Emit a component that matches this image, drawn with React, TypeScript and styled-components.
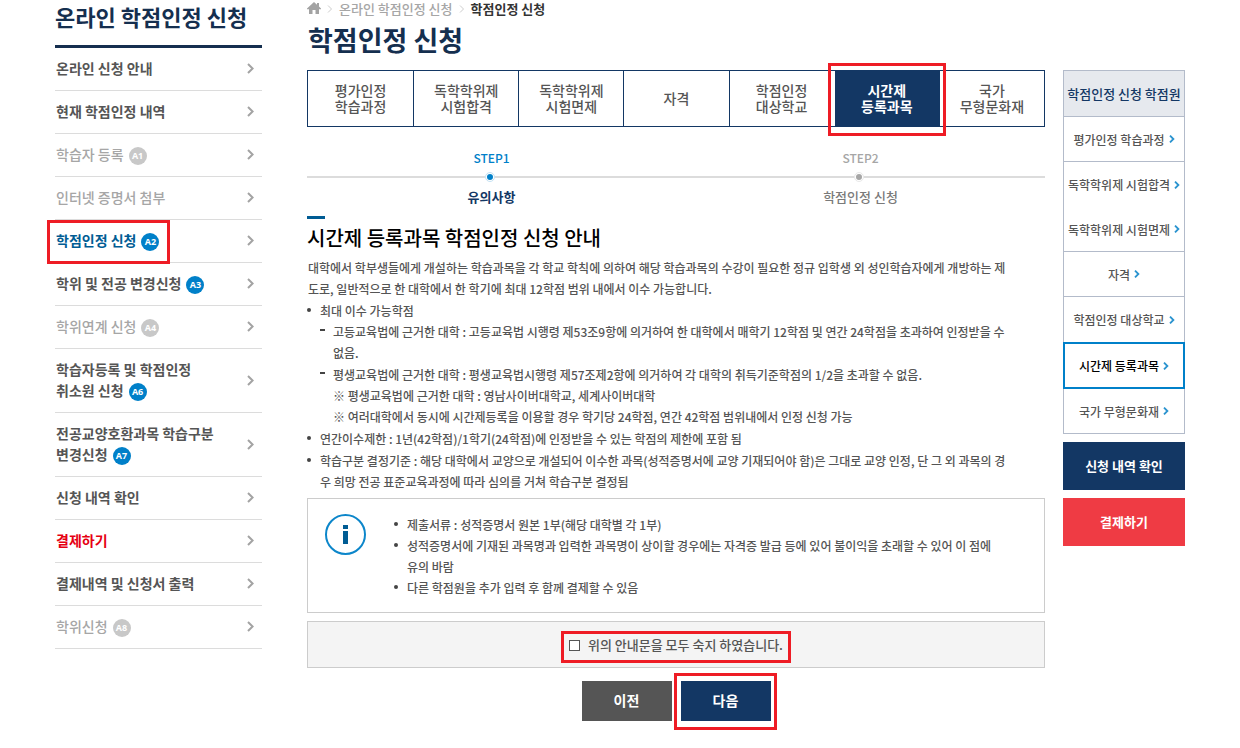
import React, { useState } from "react";
import styled, { createGlobalStyle, css } from "styled-components";

const color = {
  navy: "#133764",
  ink: "#152f4f",
  blue: "#0080c9",
  deepBlue: "#005c94",
  text: "#555",
  muted: "#a6a6a6",
  line: "#dcdcdc",
  rail: "#b3bbca",
  mark: "#ee1c25",
};

const GlobalStyle = createGlobalStyle`
  *, *::before, *::after { box-sizing: border-box; }
  body {
    margin: 0;
    background: #fff;
    color: ${color.text};
    font-family: "Noto Sans CJK KR", "Noto Sans", sans-serif;
    font-size: 12px;
    font-weight: 500;
  }
  h1, h2, h3, p, ul, ol { margin: 0; padding: 0; }
  ul, ol { list-style: none; }
  a { color: inherit; text-decoration: none; }
  button { font-family: inherit; border: 0; cursor: pointer; }
`;

const Page = styled.div`
  display: grid;
  grid-template-columns: 207px minmax(0, 1fr) 122px;
  align-items: start;
  padding: 0 55px;
`;

/* Red frame laid over the control that the guide points at */
const Mark = styled.span<{ $inset: string }>`
  position: absolute;
  inset: ${(p) => p.$inset};
  border: 3px solid ${color.mark};
  pointer-events: none;
  z-index: 2;
`;

/* ---------- left menu ---------- */

const SideTitle = styled.h2`
  height: 48px;
  padding-bottom: 12px;
  border-bottom: 3px solid ${color.ink};
  color: ${color.ink};
  font-size: 22px;
  font-weight: 700;
  line-height: 32px;
  white-space: nowrap;
`;

type Tone = "normal" | "off" | "current" | "pay";
const toneColor: Record<Tone, string> = {
  normal: color.text,
  off: color.muted,
  current: color.deepBlue,
  pay: "#e60012",
};

const SideItem = styled.li`
  border-bottom: 1px solid ${color.line};
`;

const SideLink = styled.a<{ $tone: Tone }>`
  display: flex;
  align-items: center;
  justify-content: space-between;
  padding: 10px 8px 11px 1px;
  color: ${(p) => toneColor[p.$tone]};
  font-size: 14px;
  font-weight: ${(p) => (p.$tone === "off" ? 500 : 700)};
  line-height: 21px;
`;

const SideLabel = styled.span`
  position: relative;
`;

const SideLine = styled.span`
  display: flex;
  align-items: center;
  gap: 5px;
  height: 21px;
  white-space: nowrap;
`;

const Badge = styled.span<{ $off: boolean }>`
  width: 18px;
  height: 18px;
  margin-top: 2px;
  border-radius: 50%;
  background: ${(p) => (p.$off ? "#c8c8c8" : color.blue)};
  color: #fff;
  font-family: "Open Sans", sans-serif;
  font-size: 9px;
  font-weight: 700;
  line-height: 18px;
  text-align: center;
`;

/* ---------- main column ---------- */

const Main = styled.main`
  padding: 0 18px 0 45px;
`;

const Crumbs = styled.nav`
  display: flex;
  align-items: center;
  gap: 6px;
  height: 18px;
  color: ${color.muted};
  font-size: 13px;
  line-height: 18px;
  strong { color: #333; font-weight: 700; }
`;

const Title = styled.h1`
  height: 52px;
  padding-left: 1px;
  color: ${color.ink};
  font-size: 27px;
  font-weight: 700;
  line-height: 44px;
`;

const Tabs = styled.ul`
  display: grid;
  grid-template-columns: repeat(7, 1fr);
  height: 57px;
  border: 1px solid ${color.navy};
`;

const Tab = styled.li<{ $active: boolean }>`
  position: relative;
  display: flex;
  & + & { border-left: 1px solid ${color.navy}; }
  ${(p) => p.$active && css`
    && { border-left-color: #fff; }
    & + li { border-left-color: #fff; }
  `}
`;

const TabLink = styled.a<{ $active: boolean }>`
  flex: 1;
  display: flex;
  align-items: center;
  justify-content: center;
  padding-bottom: 2px;
  background: ${(p) => (p.$active ? color.navy : "transparent")};
  color: ${(p) => (p.$active ? "#fff" : color.text)};
  font-size: 14px;
  font-weight: ${(p) => (p.$active ? 700 : 500)};
  line-height: 16px;
  text-align: center;
  white-space: pre-line;
`;

const Steps = styled.ol`
  display: grid;
  grid-template-columns: 1fr 1fr;
  padding-top: 20px;
`;

const Step = styled.li<{ $on: boolean }>`
  text-align: center;
  color: ${(p) => (p.$on ? color.blue : color.muted)};
  line-height: 21px;
  font-size: 12px;
`;

const StepTrack = styled.div`
  position: relative;
  height: 2px;
  margin: 8px 0 9px;
  background: ${color.line};
`;

const StepDot = styled.span<{ $on: boolean }>`
  position: absolute;
  left: calc(50% - 7px);
  top: -4px;
  width: 10px;
  height: 10px;
  border: 2px solid #fff;
  border-radius: 50%;
  outline: 1px solid ${(p) => (p.$on ? "#c5e2f3" : "#e8e8e8")};
  outline-offset: -1px;
  background: ${(p) => (p.$on ? color.blue : color.muted)};
`;

const StepLabel = styled.p<{ $on: boolean }>`
  color: ${(p) => (p.$on ? color.navy : "#7a7a7a")};
  font-size: 13px;
  font-weight: ${(p) => (p.$on ? 700 : 500)};
  line-height: 20px;
`;

const Heading = styled.h3`
  margin-top: 9px;
  color: #000;
  font-size: 20px;
  font-weight: 500;
  line-height: 38px;
  &::before {
    content: "";
    display: block;
    width: 18px;
    height: 3px;
    background: ${color.deepBlue};
  }
`;

const Copy = styled.p`
  margin-bottom: 1px;
  padding-left: 1px;
  line-height: 21px;
`;

const Notes = styled.ul<{ $tight?: boolean }>`
  display: flex;
  flex-direction: column;
  gap: ${(p) => (p.$tight ? 0 : 1)}px;
  line-height: 21px;
`;

const Note = styled.li<{ $dash?: boolean }>`
  position: relative;
  padding-left: 13px;
  &::before {
    content: "";
    position: absolute;
    left: 0;
    top: 8px;
    width: ${(p) => (p.$dash ? 5 : 4)}px;
    height: ${(p) => (p.$dash ? 2 : 4)}px;
    border-radius: ${(p) => (p.$dash ? 0 : 2)}px;
    background: #444;
  }
`;

const InfoBox = styled.section`
  display: flex;
  align-items: flex-start;
  gap: 28px;
  margin-top: 6px;
  padding: 15px 17px 14px;
  border: 1px solid #ccc;
  ul { flex: 1; min-width: 0; }
`;

const Agree = styled.div`
  display: flex;
  align-items: center;
  justify-content: center;
  height: 47px;
  margin-top: 8px;
  border: 1px solid #ccc;
  background: #f4f4f4;
`;

const AgreeLabel = styled.label`
  position: relative;
  display: flex;
  align-items: center;
  gap: 8px;
  font-size: 13px;
  line-height: 20px;
`;

const Check = styled.input`
  appearance: none;
  width: 11px;
  height: 11px;
  margin: 2px 0 0;
  border: 1px solid #555;
  background: #fff;
  &:checked { background: ${color.navy}; }
`;

const Actions = styled.div`
  display: flex;
  justify-content: center;
  gap: 9px;
  padding: 13px 0 27px;
`;

const Action = styled.button<{ $primary?: boolean }>`
  position: relative;
  width: 90px;
  height: 40px;
  padding: 0 0 2px;
  background: ${(p) => (p.$primary ? color.navy : "#555")};
  color: #fff;
  font-size: 14px;
  font-weight: 700;
`;

/* ---------- right rail ---------- */

const Rail = styled.aside`
  padding-top: 70px;
`;

const RailTitle = styled.h2`
  height: 47px;
  border: 1px solid ${color.rail};
  background: #e6e9ee;
  color: ${color.navy};
  font-size: 13px;
  font-weight: 500;
  line-height: 45px;
  text-align: center;
  white-space: nowrap;
`;

const RailItem = styled.a<{ $active?: boolean; $open?: boolean }>`
  display: flex;
  align-items: center;
  justify-content: center;
  gap: 4px;
  height: 45px;
  border: 1px solid ${color.rail};
  border-top: 0;
  font-size: 12px;
  white-space: nowrap;
  ${(p) => p.$open && css`border-bottom: 0;`}
  ${(p) => p.$active && css`
    height: 47px;
    border: 2px solid ${color.blue};
    color: #000;
  `}
`;

const RailButton = styled.button<{ $pay?: boolean }>`
  display: block;
  width: 100%;
  height: 48px;
  margin-top: 8px;
  padding: 0 0 2px;
  background: ${(p) => (p.$pay ? "#ef3b44" : color.navy)};
  color: #fff;
  font-size: 13px;
  font-weight: 700;
`;

/* ---------- icons ---------- */

const SideArrow = () => (
  <svg width="7" height="11" viewBox="0 0 7 11" fill="none" stroke="#a3a3a3" strokeWidth="2" aria-hidden="true">
    <path d="M1 1l4.6 4.5L1 10" />
  </svg>
);

const RailArrow = () => (
  <svg width="6" height="8" viewBox="0 0 6 8" fill="none" stroke="#2a93cf" strokeWidth="1.8" aria-hidden="true">
    <path d="M1 .6L4.4 4 1 7.4" />
  </svg>
);

const CrumbArrow = () => (
  <svg width="6" height="8" viewBox="0 0 6 8" fill="none" stroke="#ccc" aria-hidden="true">
    <path d="M1 .5L4.5 4 1 7.5" />
  </svg>
);

const HomeIcon = () => (
  <svg width="14" height="12" viewBox="0 0 14 12" fill="#a3a3a3" aria-hidden="true">
    <path d="M7 0L10 2.7V1h2v3.5L14 6.6V7.2H12V12H8.5V8H5.5V12H2V7.2H0V6.6z" />
  </svg>
);

const InfoIcon = () => (
  <svg width="41" height="41" viewBox="0 0 41 41" aria-hidden="true">
    <circle cx="20.5" cy="20.5" r="19.5" fill="#fff" stroke="#0c86ca" strokeWidth="2" />
    <rect x="18" y="11" width="5" height="4" fill={color.deepBlue} />
    <rect x="18" y="17" width="5" height="13" fill={color.deepBlue} />
  </svg>
);

/* ---------- data ---------- */

const menu: { lines: string[]; badge?: string; tone?: Tone }[] = [
  { lines: ["온라인 신청 안내"] },
  { lines: ["현재 학점인정 내역"] },
  { lines: ["학습자 등록"], badge: "A1", tone: "off" },
  { lines: ["인터넷 증명서 첨부"], tone: "off" },
  { lines: ["학점인정 신청"], badge: "A2", tone: "current" },
  { lines: ["학위 및 전공 변경신청"], badge: "A3" },
  { lines: ["학위연계 신청"], badge: "A4", tone: "off" },
  { lines: ["학습자등록 및 학점인정", "취소원 신청"], badge: "A6" },
  { lines: ["전공교양호환과목 학습구분", "변경신청"], badge: "A7" },
  { lines: ["신청 내역 확인"] },
  { lines: ["결제하기"], tone: "pay" },
  { lines: ["결제내역 및 신청서 출력"] },
  { lines: ["학위신청"], badge: "A8", tone: "off" },
];

const tabs = [
  "평가인정\n학습과정",
  "독학학위제\n시험합격",
  "독학학위제\n시험면제",
  "자격",
  "학점인정\n대상학교",
  "시간제\n등록과목",
  "국가\n무형문화재",
];
const activeTab = 5;

const steps = [
  { name: "STEP1", label: "유의사항", on: true },
  { name: "STEP2", label: "학점인정 신청", on: false },
];

const rail: { label: string; open?: boolean; active?: boolean }[] = [
  { label: "평가인정 학습과정" },
  { label: "독학학위제 시험합격", open: true },
  { label: "독학학위제 시험면제" },
  { label: "자격" },
  { label: "학점인정 대상학교", open: true },
  { label: "시간제 등록과목", active: true },
  { label: "국가 무형문화재" },
];

export default function App() {
  const [agreed, setAgreed] = useState(false);

  return (
    <>
      <GlobalStyle />
      <Page>
        <nav aria-label="온라인 학점인정 신청">
          <SideTitle>온라인 학점인정 신청</SideTitle>
          <ul>
            {menu.map(({ lines, badge, tone = "normal" }) => (
              <SideItem key={lines[0]}>
                <SideLink href="#" $tone={tone}>
                  <SideLabel>
                    {lines.map((line, i) => (
                      <SideLine key={line}>
                        {line}
                        {badge && i === lines.length - 1 && (
                          <Badge $off={tone === "off"}>{badge}</Badge>
                        )}
                      </SideLine>
                    ))}
                    {tone === "current" && <Mark $inset="-10px -11px -13px -9px" />}
                  </SideLabel>
                  <SideArrow />
                </SideLink>
              </SideItem>
            ))}
          </ul>
        </nav>

        <Main>
          <Crumbs aria-label="breadcrumb">
            <a href="#" aria-label="홈"><HomeIcon /></a>
            <CrumbArrow />
            <a href="#">온라인 학점인정 신청</a>
            <CrumbArrow />
            <strong>학점인정 신청</strong>
          </Crumbs>
          <Title>학점인정 신청</Title>

          <Tabs>
            {tabs.map((label, i) => (
              <Tab key={label} $active={i === activeTab}>
                <TabLink href="#" $active={i === activeTab}>{label}</TabLink>
                {i === activeTab && <Mark $inset="-8px -7px -10px -7px" />}
              </Tab>
            ))}
          </Tabs>

          <Steps>
            {steps.map((s) => (
              <Step key={s.name} $on={s.on}>
                {s.name}
                <StepTrack><StepDot $on={s.on} /></StepTrack>
                <StepLabel $on={s.on}>{s.label}</StepLabel>
              </Step>
            ))}
          </Steps>

          <Heading>시간제 등록과목 학점인정 신청 안내</Heading>
          <Copy>
            대학에서 학부생들에게 개설하는 학습과목을 각 학교 학칙에 의하여 해당 학습과목의 수강이 필요한 정규 입학생 외 성인학습자에게 개방하는 제
            <br />
            도로, 일반적으로 한 대학에서 한 학기에 최대 12학점 범위 내에서 이수 가능합니다.
          </Copy>
          <Notes>
            <Note>
              최대 이수 가능학점
              <Notes>
                <Note $dash>
                  고등교육법에 근거한 대학 : 고등교육법 시행령 제53조9항에 의거하여 한 대학에서 매학기 12학점 및 연간 24학점을 초과하여 인정받을 수
                  <br />
                  없음.
                </Note>
                <Note $dash>
                  평생교육법에 근거한 대학 : 평생교육법시행령 제57조제2항에 의거하여 각 대학의 취득기준학점의 1/2을 초과할 수 없음.
                  <p>※ 평생교육법에 근거한 대학 : 영남사이버대학교, 세계사이버대학</p>
                  <p>※ 여러대학에서 동시에 시간제등록을 이용할 경우 학기당 24학점, 연간 42학점 범위내에서 인정 신청 가능</p>
                </Note>
              </Notes>
            </Note>
            <Note>연간이수제한 : 1년(42학점)/1학기(24학점)에 인정받을 수 있는 학점의 제한에 포함 됨</Note>
            <Note>
              학습구분 결정기준 : 해당 대학에서 교양으로 개설되어 이수한 과목(성적증명서에 교양 기재되어야 함)은 그대로 교양 인정, 단 그 외 과목의 경
              <br />
              우 희망 전공 표준교육과정에 따라 심의를 거쳐 학습구분 결정됨
            </Note>
          </Notes>

          <InfoBox>
            <InfoIcon />
            <Notes $tight>
              <Note>제출서류 : 성적증명서 원본 1부(해당 대학별 각 1부)</Note>
              <Note>
                성적증명서에 기재된 과목명과 입력한 과목명이 상이할 경우에는 자격증 발급 등에 있어 불이익을 초래할 수 있어 이 점에
                <br />
                유의 바람
              </Note>
              <Note>다른 학점원을 추가 입력 후 함께 결제할 수 있음</Note>
            </Notes>
          </InfoBox>

          <Agree>
            <AgreeLabel>
              <Check type="checkbox" checked={agreed} onChange={(e) => setAgreed(e.target.checked)} />
              위의 안내문을 모두 숙지 하였습니다.
              <Mark $inset="-4px -8px -8px -8px" />
            </AgreeLabel>
          </Agree>

          <Actions>
            <Action type="button">이전</Action>
            <Action type="button" $primary>
              다음
              <Mark $inset="-8px -6px -9px -7px" />
            </Action>
          </Actions>
        </Main>

        <Rail>
          <RailTitle>학점인정 신청 학점원</RailTitle>
          {rail.map(({ label, open, active }) => (
            <RailItem key={label} href="#" $open={open} $active={active}>
              {label}
              <RailArrow />
            </RailItem>
          ))}
          <RailButton type="button">신청 내역 확인</RailButton>
          <RailButton type="button" $pay>결제하기</RailButton>
        </Rail>
      </Page>
    </>
  );
}
